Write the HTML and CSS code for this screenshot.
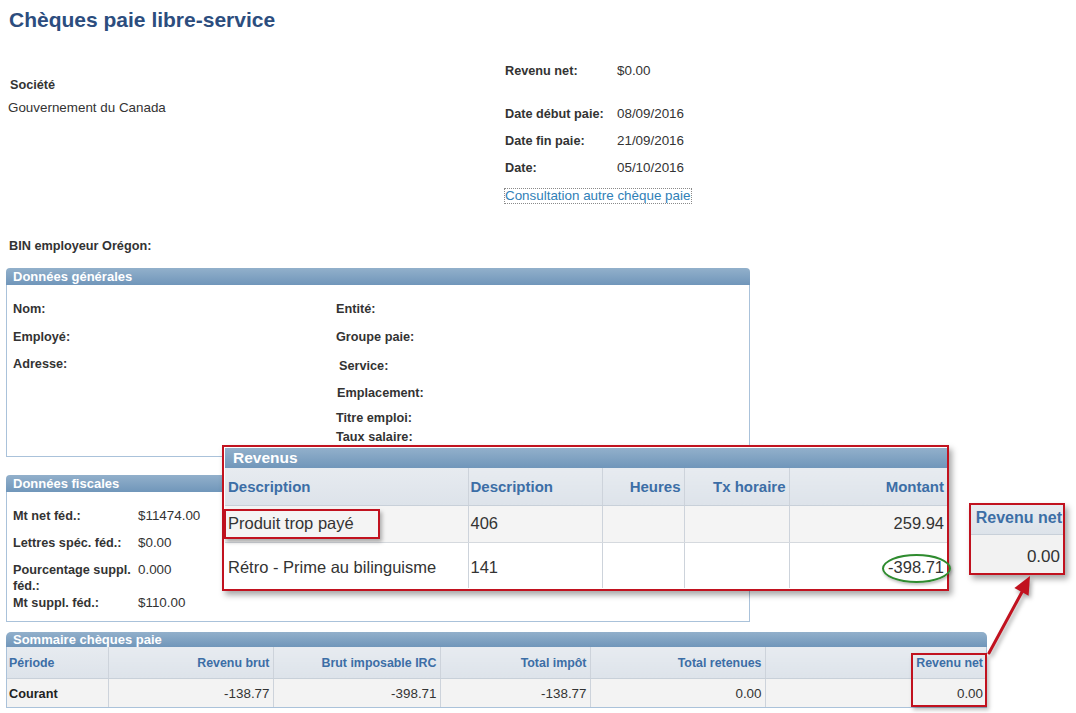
FILE: index.html
```html
<!DOCTYPE html>
<html lang="fr">
<head>
<meta charset="utf-8">
<title>Chèques paie libre-service</title>
<link rel="stylesheet" href="styles.css">
</head>
<body>
<div class="page">
  <h1 class="title">Chèques paie libre-service</h1>

  <div class="top">
    <div class="company">
      <div class="lbl company-lbl">Société</div>
      <div class="val company-val">Gouvernement du Canada</div>
    </div>
    <div class="check-info">
      <div class="kv kv-first"><span class="lbl kv-key">Revenu net:</span><span class="val">$0.00</span></div>
      <div class="kv"><span class="lbl kv-key">Date début paie:</span><span class="val">08/09/2016</span></div>
      <div class="kv"><span class="lbl kv-key">Date fin paie:</span><span class="val">21/09/2016</span></div>
      <div class="kv"><span class="lbl kv-key">Date:</span><span class="val">05/10/2016</span></div>
      <div class="kv"><a class="link" href="#">Consultation autre chèque paie</a></div>
    </div>
  </div>

  <div class="lbl bin">BIN employeur Orégon:</div>

  <section class="panel general">
    <div class="panel-head">Données générales</div>
    <div class="panel-body general-body">
      <div class="gen-left">
        <div class="lbl">Nom:</div>
        <div class="lbl">Employé:</div>
        <div class="lbl">Adresse:</div>
      </div>
      <div class="gen-right">
        <div class="lbl">Entité:</div>
        <div class="lbl">Groupe paie:</div>
        <div class="lbl nudge3">Service:</div>
        <div class="lbl nudge1">Emplacement:</div>
        <div class="lbl">Titre emploi:</div>
        <div class="lbl">Taux salaire:</div>
      </div>
    </div>
  </section>

  <section class="panel fiscal">
    <div class="panel-head">Données fiscales</div>
    <div class="panel-body fiscal-body">
      <div class="lbl">Mt net féd.:</div><div class="val">$11474.00</div>
      <div class="lbl">Lettres spéc. féd.:</div><div class="val">$0.00</div>
      <div class="lbl">Pourcentage suppl. féd.:</div><div class="val">0.000</div>
      <div class="lbl">Mt suppl. féd.:</div><div class="val">$110.00</div>
    </div>
  </section>

  <section class="panel summary">
    <div class="panel-head summary-head">Sommaire chèques paie</div>
    <div class="summary-body">
      <table class="sum-table">
        <colgroup>
          <col class="c1"><col class="c2"><col class="c3"><col class="c4"><col class="c5"><col class="c6">
        </colgroup>
        <thead>
          <tr>
            <th class="left">Période</th>
            <th>Revenu brut</th>
            <th>Brut imposable IRC</th>
            <th>Total impôt</th>
            <th>Total retenues</th>
            <th>Revenu net</th>
          </tr>
        </thead>
        <tbody>
          <tr>
            <td class="left strong">Courant</td>
            <td>-138.77</td>
            <td>-398.71</td>
            <td>-138.77</td>
            <td>0.00</td>
            <td>0.00</td>
          </tr>
        </tbody>
      </table>
    </div>
  </section>

  <!-- Zoomed annotation: Revenus -->
  <div class="zoom-revenus">
    <div class="zr-head">Revenus</div>
    <table class="zr-table">
      <colgroup>
        <col class="z1"><col class="z2"><col class="z3"><col class="z4"><col class="z5">
      </colgroup>
      <thead>
        <tr>
          <th class="left pad4">Description</th>
          <th class="left pad2">Description</th>
          <th>Heures</th>
          <th>Tx horaire</th>
          <th>Montant</th>
        </tr>
      </thead>
      <tbody>
        <tr class="zr-r1">
          <td class="left pad4">Produit trop payé</td>
          <td class="left pad2">406</td>
          <td></td>
          <td></td>
          <td>259.94</td>
        </tr>
        <tr class="zr-r2">
          <td class="left pad4">Rétro - Prime au bilinguisme</td>
          <td class="left pad2">141</td>
          <td></td>
          <td></td>
          <td>-398.71</td>
        </tr>
      </tbody>
    </table>
    <div class="mark-produit"></div>
    <div class="mark-ellipse"></div>
  </div>

  <!-- Zoomed annotation: Revenu net -->
  <div class="zoom-net">
    <div class="zn-head">Revenu net</div>
    <div class="zn-val">0.00</div>
  </div>

  <div class="mark-sum"></div>

  <svg class="arrow" width="60" height="95" viewBox="0 0 60 95" aria-hidden="true">
    <line x1="9" y1="88" x2="42" y2="27" stroke="#c1121f" stroke-width="3" stroke-linecap="round"/>
    <polygon points="50,11 48.6,30.7 34.4,23.1" fill="#c1121f"/>
  </svg>
</div>
</body>
</html>
```

FILE: styles.css
```css
* { box-sizing: border-box; }

body {
  margin: 0;
  font-family: "Liberation Sans", Arial, sans-serif;
  color: #333;
  background: #fff;
}

.page {
  position: relative;
  width: 1076px;
  height: 713px;
  overflow: hidden;
  padding-left: 6px;
}

.lbl {
  font-weight: bold;
  font-size: 12.7px;
  line-height: 16px;
  color: #333;
}

.val {
  font-size: 13.4px;
  line-height: 16px;
  color: #333;
}

.title {
  margin: 8px 0 0 3px;
  font-size: 21px;
  line-height: 24px;
  font-weight: bold;
  color: #2c4d7e;
}

/* top area */
.top {
  display: flex;
  margin-top: 25px;
}

.company {
  width: 499px;
  padding-top: 20px;
}

.company-lbl { padding-left: 4px; }
.company-val { padding-left: 2px; margin-top: 7px; }

.check-info {
  display: flex;
  flex-direction: column;
}

.kv {
  display: flex;
  align-items: center;
  height: 27px;
}

.kv-first { margin-bottom: 16px; }

.kv-key { width: 112px; }

.link {
  font-size: 13.4px;
  line-height: 14px;
  color: #2f80b7;
  text-decoration: none;
  border: 1px dotted #8a8a8a;
  padding: 0 1px 0 0;
  margin-left: -1px;
  margin-top: 3px;
}

.bin {
  margin-top: 30px;
  padding-left: 3px;
}

/* panels */
.panel-head {
  height: 17px;
  line-height: 17px;
  padding-left: 7px;
  font-size: 13px;
  font-weight: bold;
  color: #fff;
  background: linear-gradient(#92b0cb, #7096ba);
  border-radius: 4px 4px 0 0;
}

.panel-body {
  border: 1px solid #aac2da;
  border-top: none;
}

.general {
  width: 744px;
  margin-top: 14px;
}

.general-body {
  height: 172px;
  display: flex;
  padding: 16px 0 0 6px;
}

.gen-left {
  width: 323px;
  display: grid;
  grid-template-rows: 28px 27px 16px;
  align-content: start;
}

.gen-right {
  display: grid;
  grid-template-rows: 28px 29px 27px 25px 19px 16px;
  align-content: start;
}

.nudge3 { padding-left: 3px; }
.nudge1 { padding-left: 1px; }

.fiscal {
  width: 744px;
  margin-top: 18px;
}

.fiscal-body {
  height: 130px;
  padding: 16px 0 0 6px;
  display: grid;
  grid-template-columns: 125px 1fr;
  grid-template-rows: 27px 27px 33px 16px;
  align-content: start;
}

.summary {
  width: 981px;
  margin-top: 10px;
}

.summary-head {
  height: 15px;
  line-height: 15px;
  border-radius: 5px 5px 0 0;
}

.summary-body {
  border: 1px solid #aac2da;
  border-top: none;
}

.sum-table {
  width: 979px;
  border-collapse: collapse;
  table-layout: fixed;
}

.sum-table .c1 { width: 101px; }
.sum-table .c2 { width: 165px; }
.sum-table .c3 { width: 167px; }
.sum-table .c4 { width: 150px; }
.sum-table .c5 { width: 175px; }
.sum-table .c6 { width: 221px; }

.sum-table th,
.sum-table td {
  text-align: right;
  padding: 0 3px;
  border-left: 1px solid #cdd3db;
  white-space: nowrap;
}

.sum-table th:first-child,
.sum-table td:first-child { border-left: none; }

.sum-table th {
  height: 31px;
  padding-top: 1px;
  font-size: 12.4px;
  font-weight: bold;
  color: #3c6ea6;
  background: linear-gradient(#e7ebf0, #dde3ea);
  border-bottom: 1px solid #c8d0d9;
}

.sum-table td {
  height: 29px;
  padding-top: 2px;
  font-size: 13.4px;
  color: #333;
  background: #f3f3f3;
}

.sum-table .left { text-align: left; padding-left: 2px; }
.sum-table .strong { font-weight: bold; font-size: 12.7px; color: #222; }

/* zoomed Revenus annotation */
.zoom-revenus {
  position: absolute;
  left: 222px;
  top: 445px;
  width: 727px;
  height: 146px;
  border: 2px solid #c1121f;
  background: #fff;
  padding: 1px 0 0 1px;
  box-shadow: 3px 4px 6px rgba(0, 0, 0, 0.35);
}

.zr-head {
  height: 20px;
  line-height: 20px;
  padding-left: 8px;
  font-size: 15.5px;
  font-weight: bold;
  color: #fff;
  background: linear-gradient(#92b0cb, #7096ba);
}

.zr-table {
  width: 722px;
  border-collapse: collapse;
  table-layout: fixed;
}

.zr-table .z1 { width: 243px; }
.zr-table .z2 { width: 134px; }
.zr-table .z3 { width: 82px; }
.zr-table .z4 { width: 105px; }
.zr-table .z5 { width: 158px; }

.zr-table th,
.zr-table td {
  text-align: right;
  padding: 0 3px 0 0;
  border-left: 1px solid #cdd3db;
  white-space: nowrap;
}

.zr-table th:first-child,
.zr-table td:first-child { border-left: none; }

.zr-table th {
  height: 37px;
  font-size: 15px;
  font-weight: bold;
  color: #3c6ea6;
  background: linear-gradient(#e7ebf0, #dde3ea);
  border-bottom: 1px solid #c8d0d9;
}

.zr-table td {
  font-size: 16.5px;
  color: #333;
}

.zr-r1 td {
  height: 37px;
  background: #f4f4f4;
  border-bottom: 1px solid #d5d9de;
}

.zr-r2 td {
  height: 46px;
  padding-top: 5px;
  background: #fff;
}

.zr-table .left { text-align: left; }
.zr-table .pad4 { padding-left: 3px; }
.zr-table .pad2 { padding-left: 2px; }

.mark-produit {
  position: absolute;
  left: 0;
  top: 62px;
  width: 156px;
  height: 30px;
  border: 2px solid #c1121f;
  box-shadow: 2px 3px 4px rgba(0, 0, 0, 0.3);
}

.mark-ellipse {
  position: absolute;
  left: 658px;
  top: 107px;
  width: 69px;
  height: 29px;
  border: 2px solid #2e8b2e;
  border-radius: 50%;
  box-shadow: 1px 2px 3px rgba(0, 0, 0, 0.25);
}

/* zoomed Revenu net annotation */
.zoom-net {
  position: absolute;
  left: 969px;
  top: 503px;
  width: 96px;
  height: 72px;
  border: 2px solid #c1121f;
  background: #f2f2f2;
  box-shadow: 3px 4px 6px rgba(0, 0, 0, 0.35);
}

.zn-head {
  height: 30px;
  line-height: 26px;
  padding-right: 1px;
  text-align: right;
  font-size: 16px;
  font-weight: bold;
  color: #3c6ea6;
  background: linear-gradient(#e7ebf0, #dde3ea);
  border-bottom: 1px solid #c8d0d9;
}

.zn-val {
  height: 38px;
  line-height: 38px;
  padding: 3px 3px 0 0;
  text-align: right;
  font-size: 17px;
  color: #333;
}

.mark-sum {
  position: absolute;
  left: 911px;
  top: 653px;
  width: 76px;
  height: 54px;
  border: 2px solid #c1121f;
  box-shadow: 2px 3px 4px rgba(0, 0, 0, 0.25);
}

.arrow {
  position: absolute;
  left: 980px;
  top: 565px;
  filter: drop-shadow(2px 3px 2px rgba(0, 0, 0, 0.35));
}
```
